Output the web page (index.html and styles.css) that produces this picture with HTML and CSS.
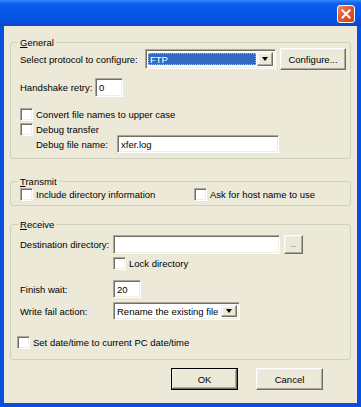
FILE: index.html
```html
<!DOCTYPE html>
<html lang="en">

<head>
  <meta charset="UTF-8" />
  <title>Protocol settings</title>
  <link rel="stylesheet" href="styles.css">
</head>

<body>
  <div class="window">
    <div class="titlebar">
      <button class="close" aria-label="Close">
        <svg width="10" height="10" viewBox="0 0 10 10">
          <path d="M1.5 1.5 L8.5 8.5 M8.5 1.5 L1.5 8.5" stroke="#fff" stroke-width="2" stroke-linecap="square" />
        </svg>
      </button>
    </div>

    <div class="client">
      <div class="group general">
        <div class="group-title"><u>G</u>eneral</div>

        <div class="row row-protocol">
          <span class="label lbl-protocol">Select protocol to configure:</span>
          <div class="combo combo-protocol">
            <span class="combo-text selected">FTP</span>
            <span class="combo-btn"><i class="arrow"></i></span>
          </div>
          <button class="btn btn-configure">Configure...</button>
        </div>

        <div class="row row-retry">
          <span class="label lbl-retry">Handshake retry:</span>
          <span class="edit edit-retry">0</span>
        </div>

        <label class="check check-convert"><span class="box"></span>Convert file names to upper case</label>
        <label class="check check-debug"><span class="box"></span>Debug transfer</label>

        <div class="row row-debugfile">
          <span class="label lbl-debugfile">Debug file name:</span>
          <span class="edit edit-debugfile">xfer.log</span>
        </div>
      </div>

      <div class="group transmit">
        <div class="group-title"><u>T</u>ransmit</div>
        <div class="row row-transmit">
          <label class="check check-include"><span class="box"></span>Include directory information</label>
          <label class="check"><span class="box"></span>Ask for host name to use</label>
        </div>
      </div>

      <div class="group receive">
        <div class="group-title"><u>R</u>eceive</div>

        <div class="row row-dest">
          <span class="label lbl-recv">Destination directory:</span>
          <span class="edit edit-dest"></span>
          <button class="btn btn-browse">...</button>
        </div>

        <label class="check check-lock"><span class="box"></span>Lock directory</label>

        <div class="row row-finish">
          <span class="label lbl-recv">Finish wait:</span>
          <span class="edit edit-finish">20</span>
        </div>

        <div class="row row-fail">
          <span class="label lbl-recv">Write fail action:</span>
          <div class="combo combo-fail">
            <span class="combo-text">Rename the existing file</span>
            <span class="combo-btn"><i class="arrow"></i></span>
          </div>
        </div>

        <label class="check check-date"><span class="box"></span>Set date/time to current PC date/time</label>
      </div>

      <div class="buttons">
        <button class="btn btn-dialog btn-default">OK</button>
        <button class="btn btn-dialog">Cancel</button>
      </div>
    </div>
  </div>
</body>

</html>
```

FILE: styles.css
```css
html,
body {
  margin: 0;
  background: #ffffff;
  font-family: 'Liberation Sans', Arial, sans-serif;
  font-size: 9.5px;
  color: #000;
}

.window {
  width: 361px;
  height: 407px;
  display: flex;
  flex-direction: column;
}

/* title bar */
.titlebar {
  height: 26px;
  box-sizing: border-box;
  padding: 5px 6px 0 0;
  display: flex;
  justify-content: flex-end;
  align-items: flex-start;
  background: linear-gradient(to bottom, #3b8cf8 0, #1c6cf6 2px, #0a5ef0 4px, #0558ea 10px, #0454e4 18px, #0a4ed8 23px, #0b46c8 26px);
}

.close {
  width: 18px;
  height: 18px;
  padding: 0;
  border: 1px solid #fff;
  border-radius: 3px;
  background: linear-gradient(135deg, #ee8a66 0%, #e2582f 45%, #c9441d 100%);
  display: flex;
  align-items: center;
  justify-content: center;
}

/* client area */
.client {
  flex: 1;
  box-sizing: border-box;
  background: #ece9d8;
  border: 4px solid #0a50e0;
  border-top: 0;
  padding: 0 6px;
  display: flex;
  flex-direction: column;
}

.group {
  border: 1px solid #d0d0bf;
  border-radius: 3px;
  padding-left: 9px;
  display: flex;
  flex-direction: column;
}

.group-title {
  align-self: flex-start;
  margin: -7px 0 0 -2px;
  padding: 0 2px;
  line-height: 13px;
  background: #ece9d8;
}

.general {
  margin-top: 16px;
  padding-bottom: 5px;
}

.transmit {
  margin-top: 22px;
  padding-bottom: 4px;
}

.receive {
  margin-top: 18px;
  padding-bottom: 10px;
}

.row {
  display: flex;
  align-items: center;
}

.label {
  flex: none;
  white-space: nowrap;
}

/* general rows */
.row-protocol {
  margin-top: -1px;
  height: 22px;
}

.lbl-protocol {
  width: 125px;
}

.row-retry {
  margin-top: 8px;
  height: 19px;
}

.lbl-retry {
  width: 75px;
}

.check-convert {
  margin-top: 11px;
}

.check-debug {
  margin-top: 2px;
}

.row-debugfile {
  margin-top: -1px;
  height: 18px;
  padding-left: 16px;
}

.lbl-debugfile {
  width: 81px;
}

/* transmit */
.row-transmit {
  height: 13px;
}

.check-include {
  width: 174px;
}

/* receive rows */
.lbl-recv {
  width: 93px;
}

.row-dest {
  margin-top: 4px;
  height: 19px;
}

.check-lock {
  margin-top: 3px;
  padding-left: 93px;
}

.row-finish {
  margin-top: 10px;
  height: 18px;
}

.row-fail {
  margin-top: 4px;
  height: 18px;
}

.check-date {
  margin-top: 16px;
  margin-left: -3px;
}

/* controls */
.edit,
.combo,
.box {
  box-sizing: border-box;
  background: #fff;
  border: 1px solid;
  border-color: #aca899 #fff #fff #aca899;
  box-shadow: inset 1px 1px 0 #716f64, inset -1px -1px 0 #f1efe2;
}

.edit {
  height: 100%;
  padding: 0 3px;
  display: flex;
  align-items: center;
  white-space: nowrap;
}

.edit-retry {
  width: 28px;
}

.edit-debugfile {
  width: 162px;
}

.edit-dest {
  width: 167px;
}

.edit-finish {
  width: 28px;
}

.combo {
  display: flex;
  padding: 2px;
  height: 20px;
}

.combo-protocol {
  width: 131px;
  margin-right: 4px;
}

.combo-fail {
  width: 127px;
  height: 18px;
}

.combo-text {
  flex: 1;
  display: flex;
  align-items: center;
  padding-left: 1px;
  white-space: nowrap;
  overflow: hidden;
}

.combo-text.selected {
  margin: 1px 1px 1px 0;
  padding-left: 2px;
  background: #316ac5;
  color: #fff;
  outline: 1px dotted #9fb6e0;
  outline-offset: -1px;
}

.combo-btn {
  width: 16px;
  flex: none;
  box-sizing: border-box;
  background: #ece9d8;
  border: 1px solid;
  border-color: #f1efe2 #716f64 #716f64 #f1efe2;
  box-shadow: inset -1px -1px 0 #aca899, inset 1px 1px 0 #fff;
  display: flex;
  align-items: center;
  justify-content: center;
}

.arrow {
  width: 0;
  height: 0;
  border-left: 3.5px solid transparent;
  border-right: 3.5px solid transparent;
  border-top: 4px solid #000;
}

.btn {
  box-sizing: border-box;
  margin: 0;
  padding: 0;
  font: inherit;
  color: #000;
  background: #ece9d8;
  border: 1px solid;
  border-color: #fff #716f64 #716f64 #fff;
  box-shadow: inset -1px -1px 0 #aca899, inset 1px 1px 0 #f1efe2;
}

.btn-configure {
  width: 66px;
  height: 22px;
}

.btn-browse {
  width: 19px;
  height: 19px;
  margin-left: 4px;
  font-size: 8px;
  color: #555;
  line-height: 1;
}

.check {
  display: flex;
  align-items: center;
  height: 13px;
  white-space: nowrap;
}

.box {
  width: 13px;
  height: 13px;
  flex: none;
  margin-right: 3px;
}

/* dialog buttons */
.buttons {
  margin-top: 8px;
  padding-right: 28px;
  display: flex;
  justify-content: flex-end;
  gap: 18px;
}

.btn-dialog {
  width: 67px;
  height: 22px;
}

.btn-default {
  outline: 1px solid #000;
  outline-offset: -1px;
  border-color: #fff #404040 #404040 #fff;
  box-shadow: inset -1px -1px 0 #716f64, inset 1px 1px 0 #f1efe2, inset -2px -2px 0 #aca899;
}
```
